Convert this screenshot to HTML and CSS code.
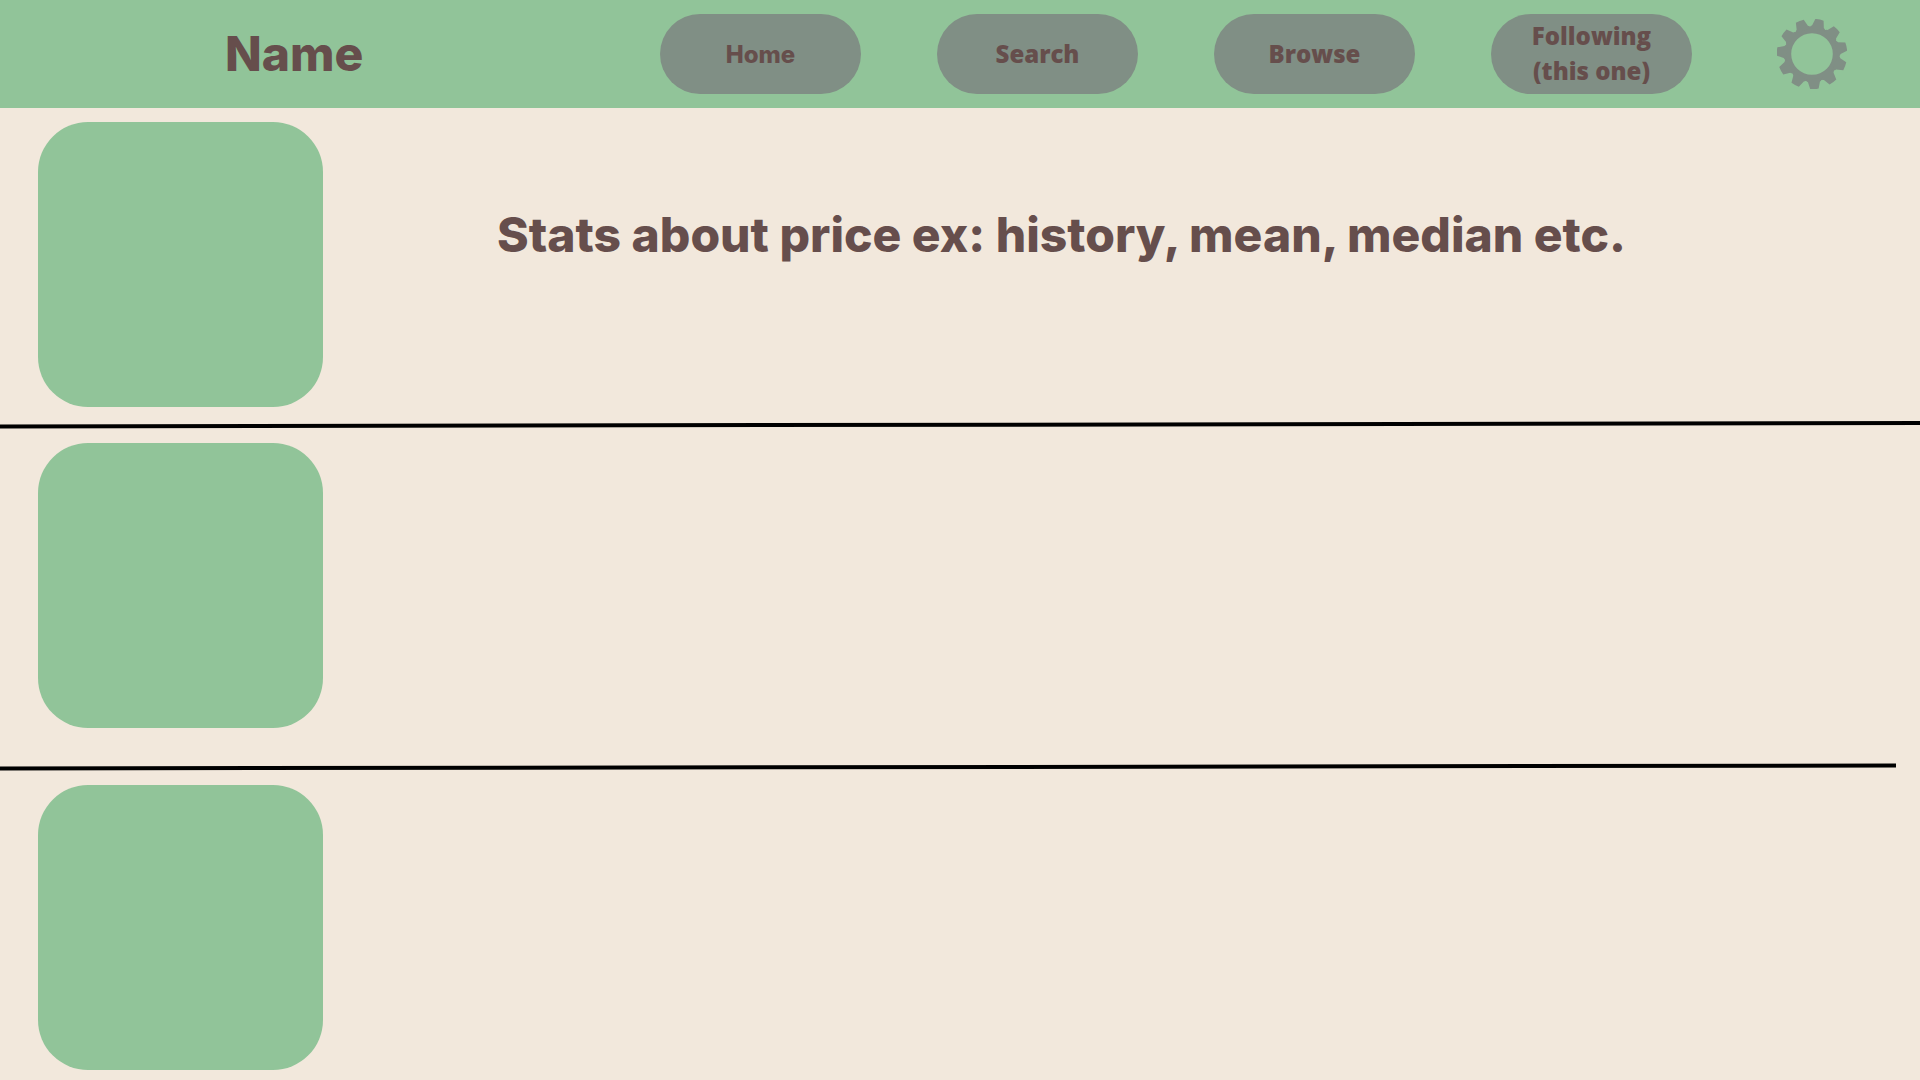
FILE: index.html
```html
<!DOCTYPE html>
<html lang="en">
<head>
<meta charset="utf-8">
<meta name="viewport" content="width=device-width, initial-scale=1">
<title>Following</title>
<link rel="stylesheet" href="styles.css">
</head>
<body>
<header class="topbar">
  <h1 class="brand">Name</h1>
  <nav class="nav">
    <button type="button" class="pill pill-home">Home</button>
    <button type="button" class="pill">Search</button>
    <button type="button" class="pill">Browse</button>
    <button type="button" class="pill">Following<br>(this one)</button>
  </nav>
  <button type="button" class="settings" aria-label="Settings">
    <svg class="gear" viewBox="-35 -35 70 70" aria-hidden="true">
      <defs>
        <path id="tooth" d="M-8 -25 Q-7.4 -27.4 -6 -28 L-4.2 -35 Q0 -35.6 4.2 -35 L6 -28 Q7.4 -27.4 8 -25 Z"/>
      </defs>
      <circle r="24.2" fill="none" stroke="currentColor" stroke-width="6.8"/>
      <g fill="currentColor" transform="rotate(-4)">
        <use href="#tooth" transform="rotate(180)"/>
        <use href="#tooth" transform="rotate(212.73)"/>
        <use href="#tooth" transform="rotate(245.45)"/>
        <use href="#tooth" transform="rotate(278.18)"/>
        <use href="#tooth" transform="rotate(310.91)"/>
        <use href="#tooth" transform="rotate(343.64)"/>
        <use href="#tooth" transform="rotate(16.36)"/>
        <use href="#tooth" transform="rotate(49.09)"/>
        <use href="#tooth" transform="rotate(81.82)"/>
        <use href="#tooth" transform="rotate(114.55)"/>
        <use href="#tooth" transform="rotate(147.27)"/>
      </g>
    </svg>
  </button>
</header>
<main>
  <section class="item">
    <div class="thumb"></div>
    <p class="stats">Stats about price ex: history, mean, median etc.</p>
  </section>
  <svg class="rule" viewBox="0 0 1920 8" preserveAspectRatio="none" aria-hidden="true">
    <path d="M0 5.5 L1920 2" stroke="#000" stroke-width="4"/>
  </svg>
  <section class="item item-loose">
    <div class="thumb"></div>
  </section>
  <svg class="rule rule-short" viewBox="0 0 1920 8" preserveAspectRatio="none" aria-hidden="true">
    <path d="M0 5.5 L1920 2.5" stroke="#000" stroke-width="4"/>
  </svg>
  <section class="item item-last">
    <div class="thumb"></div>
  </section>
</main>
</body>
</html>
```
FILE: styles.css
```css
* {
  box-sizing: border-box;
}

body {
  margin: 0;
  background: #f2e8dc;
  color: #664e4c;
  font-family: Inter, "Liberation Sans", sans-serif;
  font-weight: 800;
}

.topbar {
  display: flex;
  align-items: center;
  padding: 14px 73px 14px 225px;
  background: #91c499;
}

.brand {
  margin: 0 auto 0 0;
  font-size: 48px;
  font-weight: 800;
  line-height: 60px;
}

.nav {
  display: flex;
  gap: 76px;
}

.pill {
  width: 201px;
  height: 80px;
  padding: 0 0 2px;
  border: 0;
  border-radius: 40px;
  background: #808f85;
  color: inherit;
  font: 800 24px/35px "Open Sans", "Noto Sans", sans-serif;
}

.pill-home {
  padding: 0;
  font-family: Inter, "Liberation Sans", sans-serif;
}

.settings {
  margin-left: 85px;
  padding: 0;
  border: 0;
  background: none;
  color: #808f85;
}

.gear {
  display: block;
  width: 70px;
  height: 70px;
}

.item {
  display: flex;
  gap: 174px;
  padding: 14px 38px;
}

.item-loose {
  padding-bottom: 35px;
}

.item-last {
  padding-bottom: 10px;
}

.thumb {
  flex: none;
  width: 285px;
  height: 285px;
  border-radius: 50px;
  background: #91c499;
}

.stats {
  margin: 0;
  padding-top: 83px;
  font-size: 48px;
  line-height: 60px;
}

.rule {
  display: block;
  width: 100%;
  height: 8px;
}

.rule-short {
  width: calc(100% - 24px);
}
```
